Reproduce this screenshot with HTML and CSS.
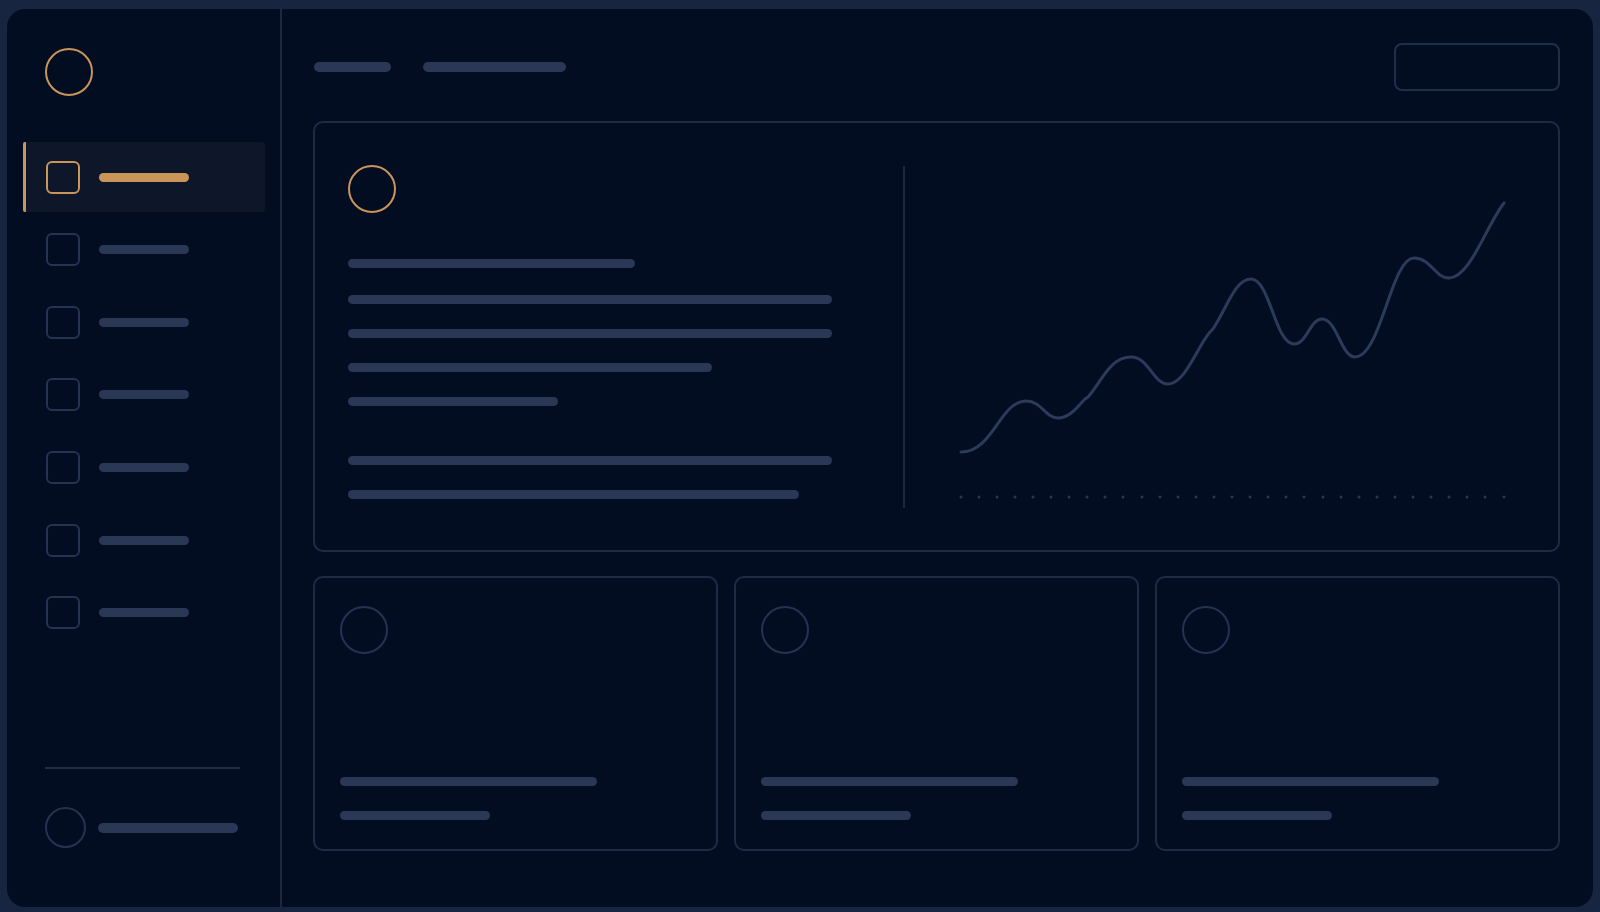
FILE: index.html
```html
<!DOCTYPE html>
<html lang="en">
<head>
<meta charset="utf-8">
<title>Dashboard wireframe</title>
<link rel="stylesheet" href="styles.css">
</head>
<body>
<div class="frame">
  <aside class="sidebar">
    <div class="logo"></div>
    <nav class="nav">
      <div class="nav-item active"><span class="nav-icon"></span><span class="nav-label"></span></div>
      <div class="nav-item"><span class="nav-icon"></span><span class="nav-label"></span></div>
      <div class="nav-item"><span class="nav-icon"></span><span class="nav-label"></span></div>
      <div class="nav-item"><span class="nav-icon"></span><span class="nav-label"></span></div>
      <div class="nav-item"><span class="nav-icon"></span><span class="nav-label"></span></div>
      <div class="nav-item"><span class="nav-icon"></span><span class="nav-label"></span></div>
      <div class="nav-item"><span class="nav-icon"></span><span class="nav-label"></span></div>
    </nav>
    <div class="side-foot">
      <div class="side-rule"></div>
      <div class="user">
        <span class="avatar"></span>
        <span class="user-name"></span>
      </div>
    </div>
  </aside>

  <main class="main">
    <header class="topbar">
      <div class="crumbs">
        <span class="crumb crumb-a"></span>
        <span class="crumb crumb-b"></span>
      </div>
      <div class="btn"></div>
    </header>

    <section class="hero">
      <div class="hero-text">
        <div class="hero-icon"></div>
        <div class="line w287 first"></div>
        <div class="line w484 l2"></div>
        <div class="line w484"></div>
        <div class="line w364"></div>
        <div class="line w210"></div>
        <div class="line w484 para"></div>
        <div class="line w451"></div>
      </div>
      <div class="vrule"></div>
      <svg class="chart" viewBox="0 0 653 342" preserveAspectRatio="none">
        <path class="curve" d="M56,286 C88,286 95,235 121,235 C137,235 140,252 153,252 C165,252 173,240 180,233 L183,231 C197,215 205,191 226,191 C244,191 248,218 263,218 C280,218 292,181 305,166 L308,163 C322,142 330,113 346,113 C365,113 370,178 389,178 C402,178 405,153 417,153 C432,153 436,191 450,191 C476,191 486,92 509,92 C526,92 530,112 544,112 C565,112 581,60 599,37"/>
        <g class="dots">
          <circle cx="56" cy="331" r="1.5"/><circle cx="74" cy="331" r="1.5"/><circle cx="92" cy="331" r="1.5"/><circle cx="110" cy="331" r="1.5"/><circle cx="128" cy="331" r="1.5"/><circle cx="146" cy="331" r="1.5"/><circle cx="164" cy="331" r="1.5"/><circle cx="182" cy="331" r="1.5"/><circle cx="200" cy="331" r="1.5"/><circle cx="218" cy="331" r="1.5"/><circle cx="237" cy="331" r="1.5"/><circle cx="255" cy="331" r="1.5"/><circle cx="273" cy="331" r="1.5"/><circle cx="291" cy="331" r="1.5"/><circle cx="309" cy="331" r="1.5"/><circle cx="327" cy="331" r="1.5"/><circle cx="345" cy="331" r="1.5"/><circle cx="363" cy="331" r="1.5"/><circle cx="381" cy="331" r="1.5"/><circle cx="399" cy="331" r="1.5"/><circle cx="418" cy="331" r="1.5"/><circle cx="436" cy="331" r="1.5"/><circle cx="454" cy="331" r="1.5"/><circle cx="472" cy="331" r="1.5"/><circle cx="490" cy="331" r="1.5"/><circle cx="508" cy="331" r="1.5"/><circle cx="526" cy="331" r="1.5"/><circle cx="544" cy="331" r="1.5"/><circle cx="562" cy="331" r="1.5"/><circle cx="580" cy="331" r="1.5"/><circle cx="599" cy="331" r="1.5"/>
        </g>
      </svg>
    </section>

    <section class="cards">
      <div class="card">
        <div class="card-icon"></div>
        <div class="card-lines"><div class="line w257"></div><div class="line w150"></div></div>
      </div>
      <div class="card">
        <div class="card-icon"></div>
        <div class="card-lines"><div class="line w257"></div><div class="line w150"></div></div>
      </div>
      <div class="card">
        <div class="card-icon"></div>
        <div class="card-lines"><div class="line w257"></div><div class="line w150"></div></div>
      </div>
    </section>
  </main>
</div>
</body>
</html>
```

FILE: styles.css
```css
* { box-sizing: border-box; }

html, body {
  margin: 0;
  padding: 0;
  width: 1600px;
  height: 912px;
  overflow: hidden;
  background: #182540;
  font-family: "Inter", "Liberation Sans", sans-serif;
}

.frame {
  margin: 9px 7px 5px 7px;
  height: 898px;
  border-radius: 18px;
  background: #030d22;
  display: flex;
  overflow: hidden;
}

/* Sidebar */
.sidebar {
  width: 275px;
  flex: none;
  border-right: 2px solid #1c2843;
  display: flex;
  flex-direction: column;
  padding-top: 39px;
}

.logo {
  width: 48px;
  height: 48px;
  margin-left: 38px;
  border: 2px solid #c99559;
  border-radius: 50%;
}

.nav {
  margin-top: 46px;
  margin-left: 16px;
  width: 242px;
  display: flex;
  flex-direction: column;
  gap: 2.67px;
}

.nav-item {
  height: 70px;
  display: flex;
  align-items: center;
  padding-left: 20px;
  border-left: 3px solid transparent;
  border-radius: 2px 4px 4px 2px;
}

.nav-item.active {
  border-left-color: #c99559;
  background: #0d1729;
}

.nav-icon {
  width: 34px;
  height: 33px;
  border: 2px solid #253352;
  border-radius: 6px;
  flex: none;
}

.nav-label {
  width: 90px;
  height: 9px;
  margin-left: 19px;
  border-radius: 5px;
  background: #2a3855;
}

.nav-item.active .nav-icon { border-color: #c99559; }
.nav-item.active .nav-label { background: #c99559; }

.side-foot {
  margin-top: auto;
  padding-bottom: 59px;
}

.side-rule {
  height: 2px;
  margin: 0 40px 0 38px;
  background: #212e4a;
}

.user {
  margin-top: 38px;
  padding-left: 38px;
  display: flex;
  align-items: center;
}

.avatar {
  width: 41px;
  height: 41px;
  border: 2px solid #253352;
  border-radius: 50%;
  flex: none;
}

.user-name {
  width: 140px;
  height: 10px;
  margin-left: 12px;
  border-radius: 5px;
  background: #2a3855;
}

/* Main */
.main {
  flex: 1;
  padding: 34px 33px 0 31px;
  display: flex;
  flex-direction: column;
}

.topbar {
  height: 48px;
  display: flex;
  align-items: center;
  justify-content: space-between;
}

.crumbs {
  display: flex;
  gap: 32px;
  margin-left: 1px;
}

.crumb {
  height: 10px;
  border-radius: 5px;
  background: #2a3855;
}
.crumb-a { width: 77px; }
.crumb-b { width: 143px; }

.btn {
  width: 166px;
  height: 48px;
  border: 2px solid #212e4a;
  border-radius: 8px;
}

.hero {
  margin-top: 30px;
  height: 431px;
  border: 2px solid #1f2b46;
  border-radius: 10px;
  display: flex;
  padding: 43px 0 42px 33px;
}

.hero-text {
  width: 484px;
  flex: none;
  display: flex;
  flex-direction: column;
}

.hero-icon {
  width: 48px;
  height: 48px;
  margin-top: -1px;
  border: 2px solid #c99559;
  border-radius: 50%;
}

.line {
  height: 9px;
  border-radius: 5px;
  background: #2a3855;
  margin-top: 25px;
}
.hero-text .first { margin-top: 46px; }
.hero-text .l2 { margin-top: 27px; }
.hero-text .para { margin-top: 50px; }

.w287 { width: 287px; }
.w484 { width: 484px; }
.w364 { width: 364px; }
.w210 { width: 210px; }
.w451 { width: 451px; }
.w257 { width: 257px; }
.w150 { width: 150px; }

.vrule {
  width: 2px;
  margin-left: 71px;
  background: #1c2843;
  flex: none;
}

.chart {
  flex: 1;
  height: 342px;
  display: block;
}

.curve {
  fill: none;
  stroke: #2c3b5a;
  stroke-width: 3;
  stroke-linecap: round;
  stroke-linejoin: round;
}

.dots circle { fill: #283654; }

.cards {
  margin-top: 24px;
  height: 275px;
  display: grid;
  grid-template-columns: repeat(3, 1fr);
  gap: 16px;
}

.card {
  border: 2px solid #1f2b46;
  border-radius: 10px;
  padding: 28px 24px 29px 25px;
  display: flex;
  flex-direction: column;
  justify-content: space-between;
}

.card-icon {
  width: 48px;
  height: 48px;
  border: 2px solid #253352;
  border-radius: 50%;
}

.card-lines .line:first-child { margin-top: 0; }
.card-lines .line { margin-top: 25px; }
```
